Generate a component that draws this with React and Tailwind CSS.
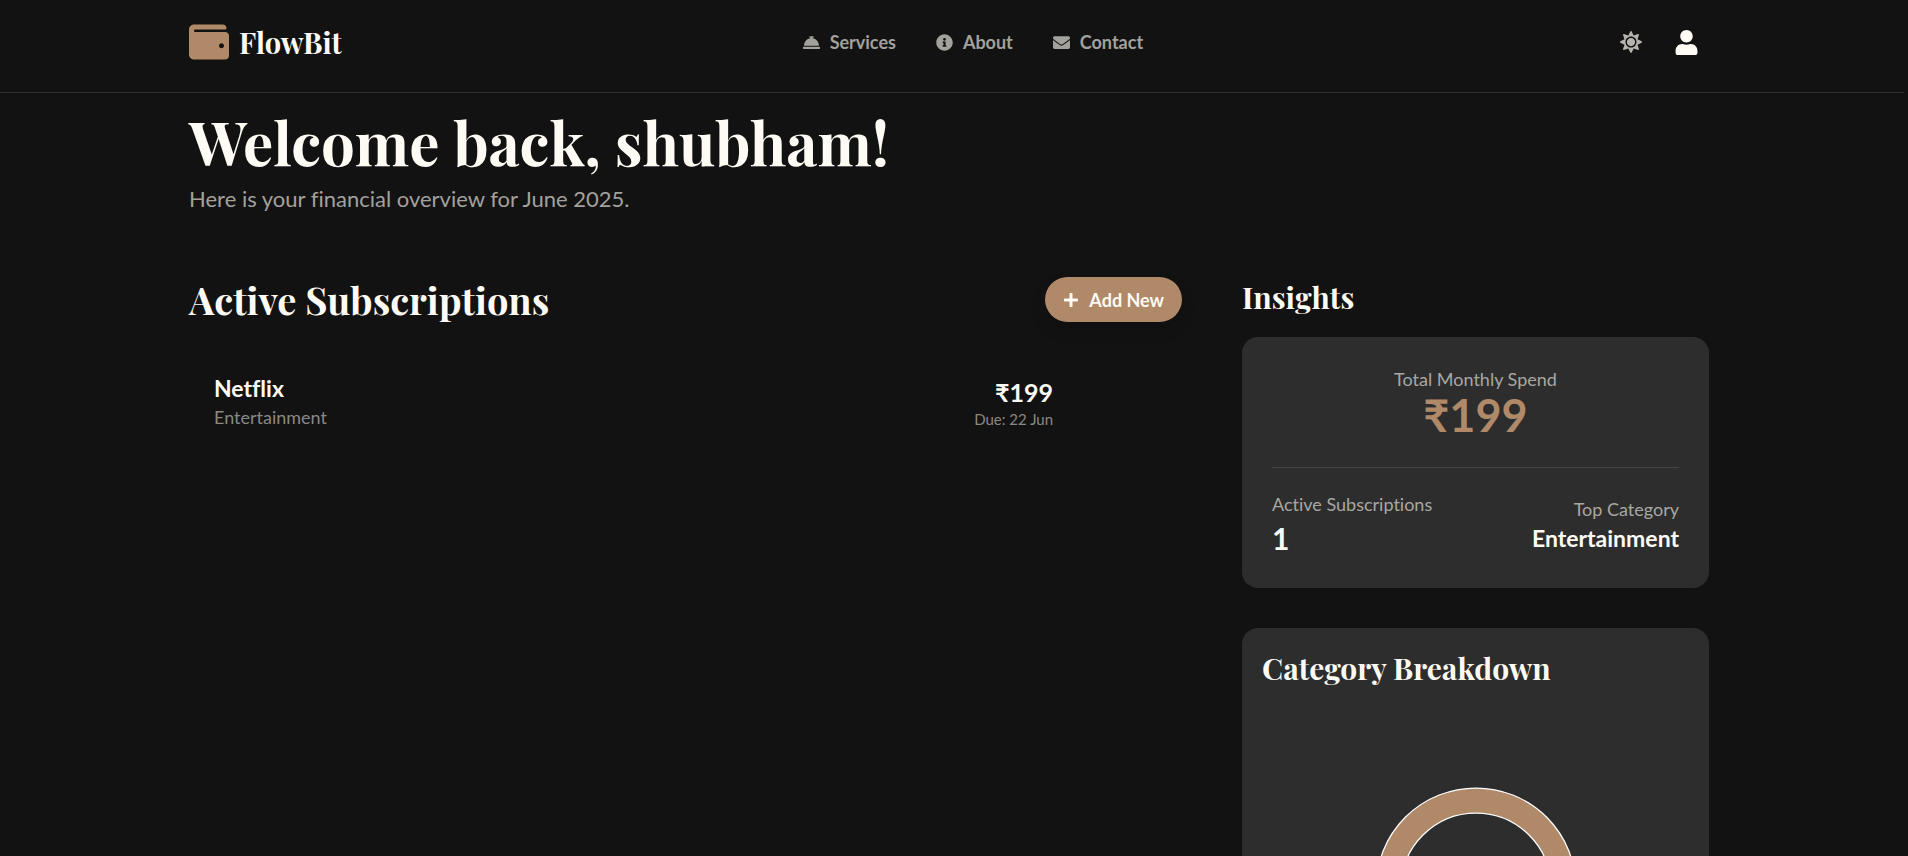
import React from "react";
import {
  FaWallet,
  FaConciergeBell,
  FaInfoCircle,
  FaEnvelope,
  FaSun,
  FaUser,
  FaPlus,
} from "react-icons/fa";

const links = [
  { label: "Services", Icon: FaConciergeBell },
  { label: "About", Icon: FaInfoCircle },
  { label: "Contact", Icon: FaEnvelope },
];

function Header() {
  return (
    <header className="mr-1 border-b border-[#2d2d2d] pr-1.5">
      <div className="mx-auto flex h-[92px] max-w-[1520px] items-center justify-between pb-2">
        <a href="#home" className="flex items-center gap-2.5">
          <FaWallet className="size-10 text-[#b08968]" />
          <span className="font-['Playfair_Display','Liberation_Serif',serif] text-[29px] leading-10 font-bold">
            FlowBit
          </span>
        </a>
        <nav className="flex gap-10">
          {links.map(({ label, Icon }) => (
            <a
              key={label}
              href={"#" + label.toLowerCase()}
              className="flex items-center gap-2.5 text-lg font-bold text-[#a3a19c]"
            >
              <Icon className="size-[17px]" />
              {label}
            </a>
          ))}
        </nav>
        <div className="flex items-center gap-8 pr-2.5 pl-4">
          <button type="button" aria-label="Toggle theme" className="text-[#b5b3ae]">
            <FaSun className="size-[22px]" />
          </button>
          <button type="button" aria-label="Account">
            <FaUser className="size-[25px]" />
          </button>
        </div>
      </div>
    </header>
  );
}

function Subscriptions() {
  return (
    <section aria-labelledby="subs">
      <div className="flex h-[45px] items-center justify-between">
        <h2 id="subs" className="font-['Playfair_Display','Liberation_Serif',serif] text-[38px] leading-[48px] font-bold">
          Active Subscriptions
        </h2>
        <button
          type="button"
          className="flex h-[45px] items-center gap-2.5 rounded-full bg-[#b08968] px-[18px] text-lg font-bold shadow-[0_8px_16px_rgba(0,0,0,0.12)]"
        >
          <FaPlus className="size-4" />
          Add New
        </button>
      </div>
      <ul className="mt-[51px]">
        <li className="flex justify-between pr-[129px] pl-[25px]">
          <div>
            <h3 className="text-[23px] leading-[30px] font-bold">Netflix</h3>
            <p className="text-lg text-[#8a8884]">Entertainment</p>
          </div>
          <div className="pt-1 text-right">
            <p className="text-[25px] leading-[30px] font-bold">₹199</p>
            <p className="text-[15px] leading-6 text-[#8a8884]">Due: 22 Jun</p>
          </div>
        </li>
      </ul>
    </section>
  );
}

function Insights() {
  return (
    <aside>
      <h2 className="font-['Playfair_Display','Liberation_Serif',serif] text-[30px] leading-10 font-bold">
        Insights
      </h2>
      <section className="mt-5 rounded-2xl bg-[#2d2d2d] p-[30px]">
        <div className="border-b border-[#4a423c] pb-7 text-center">
          <p className="text-lg leading-6 text-[#a9a7a2]">Total Monthly Spend</p>
          <p className="text-[45px] leading-[48px] font-bold text-[#b08968]">₹199</p>
        </div>
        <div className="flex items-center justify-between pt-[22px]">
          <div>
            <p className="text-lg text-[#a9a7a2]">Active Subscriptions</p>
            <p className="text-[30px] leading-10 font-bold">1</p>
          </div>
          <div className="text-right">
            <p className="text-lg text-[#a9a7a2]">Top Category</p>
            <p className="text-[23px] leading-[30px] font-bold">Entertainment</p>
          </div>
        </div>
      </section>
      <section className="mt-10 rounded-2xl bg-[#2d2d2d] p-5">
        <h2 className="font-['Playfair_Display','Liberation_Serif',serif] text-[30px] leading-10 font-bold">
          Category Breakdown
        </h2>
        <div className="flex h-[400px] items-center justify-center">
          <svg width="204" height="204" viewBox="0 0 204 204" role="img" aria-label="Entertainment 100%">
            <circle cx="102" cy="102" r="87.5" fill="none" stroke="#b08968" strokeWidth="25" />
            <circle cx="102" cy="102" r="100" fill="none" stroke="#fff" strokeWidth="1.25" />
            <circle cx="102" cy="102" r="75" fill="none" stroke="#fff" strokeWidth="1.25" />
          </svg>
        </div>
      </section>
    </aside>
  );
}

export default function App() {
  return (
    <div className="h-screen overflow-y-auto bg-[#121212] font-['Lato','Noto_Sans',sans-serif] text-[#fefaf4] [font-variant-ligatures:none] [scrollbar-width:none]">
      <Header />
      <main className="mr-1 pr-1.5 pb-10">
        <div className="mx-auto max-w-[1520px] pt-3">
          <h1 className="font-['Playfair_Display','Liberation_Serif',serif] text-[60px] leading-[72px] font-bold">
            Welcome back, shubham!
          </h1>
          <p className="mt-1.5 text-[22px] leading-8 text-[#a3a19c]">Here is your financial overview for June 2025.</p>
          <div className="mt-[62px] grid grid-cols-[minmax(0,1fr)_467px] gap-[60px]">
            <Subscriptions />
            <Insights />
          </div>
        </div>
      </main>
    </div>
  );
}
